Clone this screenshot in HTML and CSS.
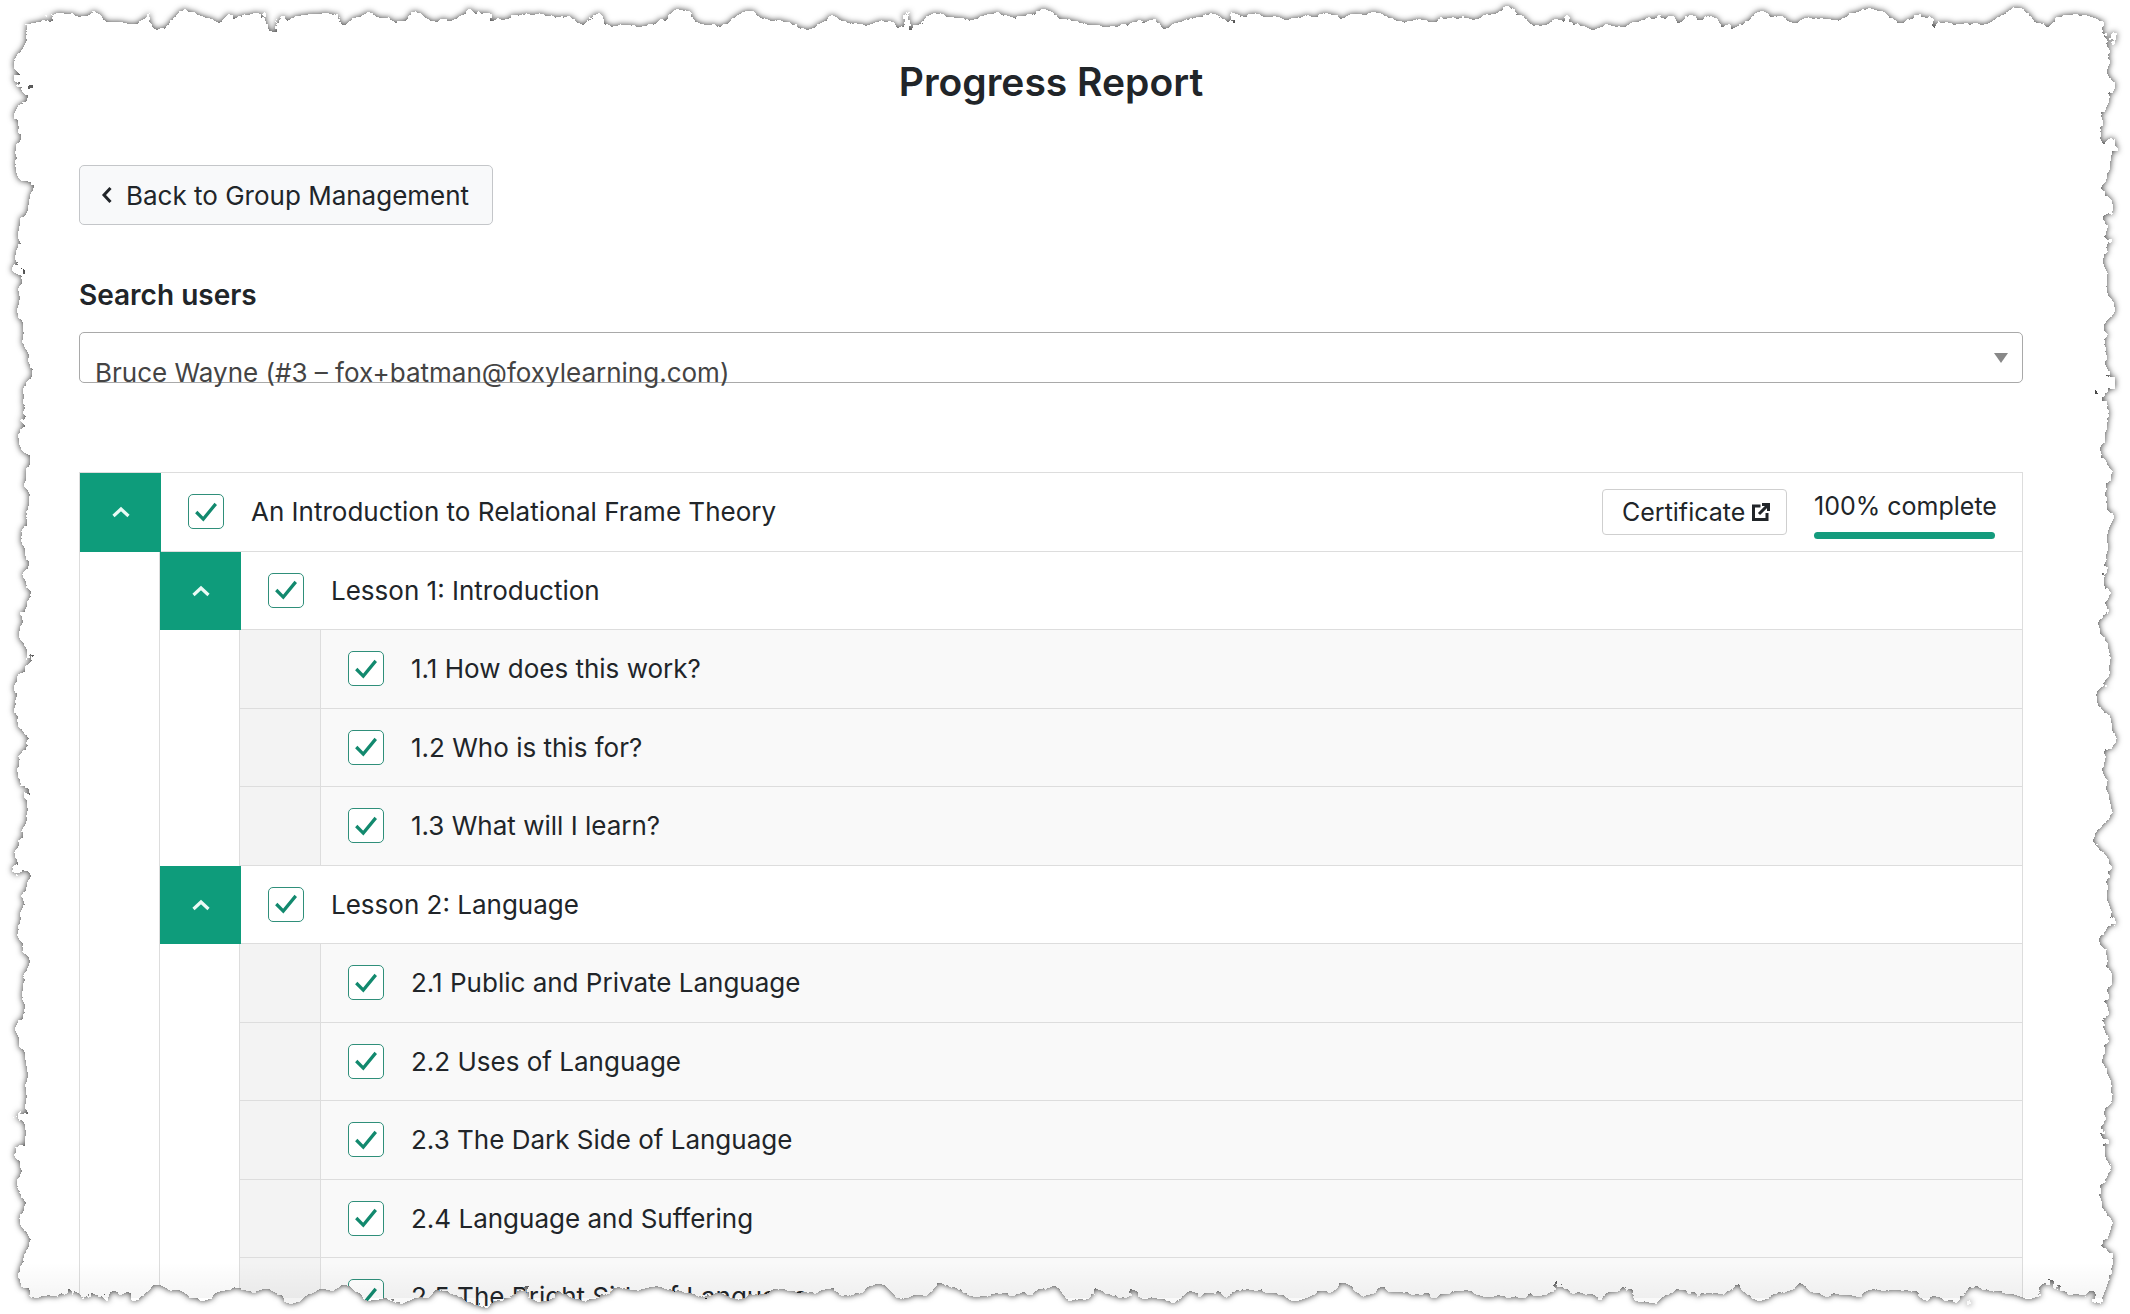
FILE: index.html
```html
<!DOCTYPE html>
<html lang="en">
  <head>
    <meta charset="UTF-8" />
    <meta name="viewport" content="width=device-width, initial-scale=1.0" />
    <title>Progress Report</title>
    <link rel="stylesheet" href="styles.css">
  </head>
  <body>
    <main class="page">
      <h1 class="title">Progress Report</h1>

      <a class="back-btn" href="#">
        <svg class="back-icon" viewBox="0 0 12 20"><path d="M9.5 3 L3 10 L9.5 17" /></svg>
        Back to Group Management
      </a>

      <label class="search-label">Search users</label>
      <div class="select">
        <span class="select-value">Bruce Wayne (#3 – fox+batman@foxylearning.com)</span>
        <span class="select-arrow"></span>
      </div>

      <div class="tree">
        <!-- Course -->
        <div class="row">
          <div class="toggle"><svg viewBox="0 0 18 12"><path d="M1.5 10 L9 3 L16.5 10" /></svg></div>
          <div class="row-main">
            <span class="check"><svg viewBox="0 0 24 24"><path d="M3 12 L9.5 18.5 L21 4.5" /></svg></span>
            <span class="row-text">An Introduction to Relational Frame Theory</span>
            <a class="cert-btn" href="#">
              Certificate
              <svg class="cert-icon" viewBox="0 0 18 18"><path d="M8.5 3 H1.5 V16.5 H15 V10" /><path d="M7 11 L16.5 1.5 M10 1.5 H16.5 V8" /></svg>
            </a>
            <div class="progress">
              <span class="progress-text">100% complete</span>
              <div class="progress-bar"></div>
            </div>
          </div>
        </div>

        <div class="children">
          <!-- Lesson 1 -->
          <div class="row">
            <div class="toggle"><svg viewBox="0 0 18 12"><path d="M1.5 10 L9 3 L16.5 10" /></svg></div>
            <div class="row-main">
              <span class="check"><svg viewBox="0 0 24 24"><path d="M3 12 L9.5 18.5 L21 4.5" /></svg></span>
              <span class="row-text">Lesson 1: Introduction</span>
            </div>
          </div>
          <div class="children">
            <div class="row topic">
              <div class="gutter"></div>
              <div class="row-main">
                <span class="check"><svg viewBox="0 0 24 24"><path d="M3 12 L9.5 18.5 L21 4.5" /></svg></span>
                <span class="row-text">1.1 How does this work?</span>
              </div>
            </div>
            <div class="row topic">
              <div class="gutter"></div>
              <div class="row-main">
                <span class="check"><svg viewBox="0 0 24 24"><path d="M3 12 L9.5 18.5 L21 4.5" /></svg></span>
                <span class="row-text">1.2 Who is this for?</span>
              </div>
            </div>
            <div class="row topic">
              <div class="gutter"></div>
              <div class="row-main">
                <span class="check"><svg viewBox="0 0 24 24"><path d="M3 12 L9.5 18.5 L21 4.5" /></svg></span>
                <span class="row-text">1.3 What will I learn?</span>
              </div>
            </div>
          </div>

          <!-- Lesson 2 -->
          <div class="row">
            <div class="toggle"><svg viewBox="0 0 18 12"><path d="M1.5 10 L9 3 L16.5 10" /></svg></div>
            <div class="row-main">
              <span class="check"><svg viewBox="0 0 24 24"><path d="M3 12 L9.5 18.5 L21 4.5" /></svg></span>
              <span class="row-text">Lesson 2: Language</span>
            </div>
          </div>
          <div class="children">
            <div class="row topic">
              <div class="gutter"></div>
              <div class="row-main">
                <span class="check"><svg viewBox="0 0 24 24"><path d="M3 12 L9.5 18.5 L21 4.5" /></svg></span>
                <span class="row-text">2.1 Public and Private Language</span>
              </div>
            </div>
            <div class="row topic">
              <div class="gutter"></div>
              <div class="row-main">
                <span class="check"><svg viewBox="0 0 24 24"><path d="M3 12 L9.5 18.5 L21 4.5" /></svg></span>
                <span class="row-text">2.2 Uses of Language</span>
              </div>
            </div>
            <div class="row topic">
              <div class="gutter"></div>
              <div class="row-main">
                <span class="check"><svg viewBox="0 0 24 24"><path d="M3 12 L9.5 18.5 L21 4.5" /></svg></span>
                <span class="row-text">2.3 The Dark Side of Language</span>
              </div>
            </div>
            <div class="row topic">
              <div class="gutter"></div>
              <div class="row-main">
                <span class="check"><svg viewBox="0 0 24 24"><path d="M3 12 L9.5 18.5 L21 4.5" /></svg></span>
                <span class="row-text">2.4 Language and Suffering</span>
              </div>
            </div>
            <div class="row topic">
              <div class="gutter"></div>
              <div class="row-main">
                <span class="check"><svg viewBox="0 0 24 24"><path d="M3 12 L9.5 18.5 L21 4.5" /></svg></span>
                <span class="row-text">2.5 The Bright Side of Language</span>
              </div>
            </div>
          </div>
        </div>
      </div>
    </main>

    <!-- Torn paper edge laid over the page -->
    <svg class="torn-edge" viewBox="0 0 2130 1314">
      <defs>
        <linearGradient id="fade" x1="0" y1="0" x2="0" y2="1">
          <stop offset="0" stop-color="#000" stop-opacity="0" />
          <stop offset="1" stop-color="#000" stop-opacity="0.04" />
        </linearGradient>
        <filter id="torn" filterUnits="userSpaceOnUse" x="-100" y="-100" width="2330" height="1514" color-interpolation-filters="sRGB">
          <feTurbulence type="fractalNoise" baseFrequency="0.028" numOctaves="5" seed="7" result="noise" />
          <feDisplacementMap in="SourceGraphic" in2="noise" scale="38" xChannelSelector="R" yChannelSelector="G" result="frame" />
          <feComponentTransfer in="frame" result="paper">
            <feFuncA type="table" tableValues="1 0" />
          </feComponentTransfer>
          <feGaussianBlur in="paper" stdDeviation="3" result="blur" />
          <feFlood flood-color="#333" result="ink" />
          <feComposite in="ink" in2="blur" operator="in" result="shadow" />
          <feComposite in="shadow" in2="frame" operator="in" result="edge" />
          <feMerge>
            <feMergeNode in="frame" />
            <feMergeNode in="edge" />
          </feMerge>
        </filter>
      </defs>
      <rect x="0" y="1262" width="2130" height="36" fill="url(#fade)" />
      <path filter="url(#torn)" fill="#fff" fill-rule="evenodd" d="M-100 -100 H2230 V1414 H-100 Z M23 20 H2107 V1294 H23 Z" />
    </svg>
  </body>
</html>
```

FILE: styles.css
```css
html,
body {
  margin: 0;
  height: 1314px;
  overflow: hidden;
}

body {
  font-family: Inter, "Noto Sans", sans-serif;
  font-size: 26px;
  color: #212529;
  background: #fff;
  position: relative;
}

.page {
  padding: 58px 107px 0 79px;
}

.title {
  margin: 0 0 59px;
  font-size: 39px;
  line-height: 48px;
  font-weight: 600;
  text-align: center;
}

.back-btn {
  display: flex;
  align-items: center;
  gap: 13px;
  width: 414px;
  height: 60px;
  box-sizing: border-box;
  padding-left: 21px;
  background: #f8f9fa;
  border: 1px solid #c4c6c9;
  border-radius: 5px;
  color: #212529;
  text-decoration: none;
}

.back-icon {
  width: 12px;
  height: 20px;
  fill: none;
  stroke: #212529;
  stroke-width: 3;
}

.search-label {
  display: block;
  margin: 53px 0 20px;
  font-size: 28px;
  line-height: 34px;
  font-weight: 600;
}

.select {
  display: flex;
  justify-content: space-between;
  height: 51px;
  box-sizing: border-box;
  padding: 0 14px 0 15px;
  border: 1px solid #a9a9a9;
  border-radius: 5px;
  color: #444;
}

.select-value {
  margin-top: 23px;
  line-height: 34px;
  height: 34px;
}

.select-arrow {
  align-self: center;
  width: 0;
  height: 0;
  border-top: 10px solid #888;
  border-left: 7px solid transparent;
  border-right: 7px solid transparent;
}

.tree {
  margin-top: 89px;
  border: 1px solid #ddd;
  border-bottom: 0;
}

.row {
  display: flex;
  height: 78.5px;
  box-sizing: border-box;
  border-bottom: 1px solid #ddd;
}

.toggle {
  flex: 0 0 81px;
  margin-bottom: -1px;
  display: flex;
  align-items: center;
  justify-content: center;
  background: #0e9c7b;
}

.toggle svg {
  width: 18px;
  height: 12px;
  fill: none;
  stroke: #eafaf5;
  stroke-width: 3.2;
}

.row-main {
  flex: 1;
  display: flex;
  align-items: center;
  gap: 27px;
  padding: 0 27px;
}

.check {
  flex: none;
  display: flex;
  align-items: center;
  justify-content: center;
  width: 36px;
  height: 35px;
  box-sizing: border-box;
  border: 1.5px solid #2f8f7a;
  border-radius: 5px;
  background: #fff;
}

.check svg {
  width: 26px;
  height: 26px;
  fill: none;
  stroke: #12896e;
  stroke-width: 3;
}

.children {
  margin-left: 79px;
  border-left: 1px solid #ddd;
}

.topic {
  background: #f9f9f9;
}

.gutter {
  flex: 0 0 81px;
  box-sizing: border-box;
  background: #f3f3f3;
  border-right: 1px solid #ddd;
}

.cert-btn {
  margin-left: auto;
  display: flex;
  align-items: center;
  gap: 7px;
  width: 185px;
  height: 46px;
  box-sizing: border-box;
  padding-left: 19px;
  border: 1px solid #cfcfcf;
  border-radius: 4px;
  font-size: 25px;
  color: #212529;
  text-decoration: none;
}

.cert-icon {
  width: 18px;
  height: 18px;
  fill: none;
  stroke: #212529;
  stroke-width: 3;
}

.progress {
  width: 181px;
}

.progress-text {
  display: block;
  font-size: 25px;
  line-height: 32px;
  white-space: nowrap;
  margin-top: 6px;
}

.progress-bar {
  height: 7px;
  margin-top: 10px;
  border-radius: 4px;
  background: #149b7d;
}

.torn-edge {
  position: absolute;
  top: 0;
  left: 0;
  width: 2130px;
  height: 1314px;
  pointer-events: none;
}
```
